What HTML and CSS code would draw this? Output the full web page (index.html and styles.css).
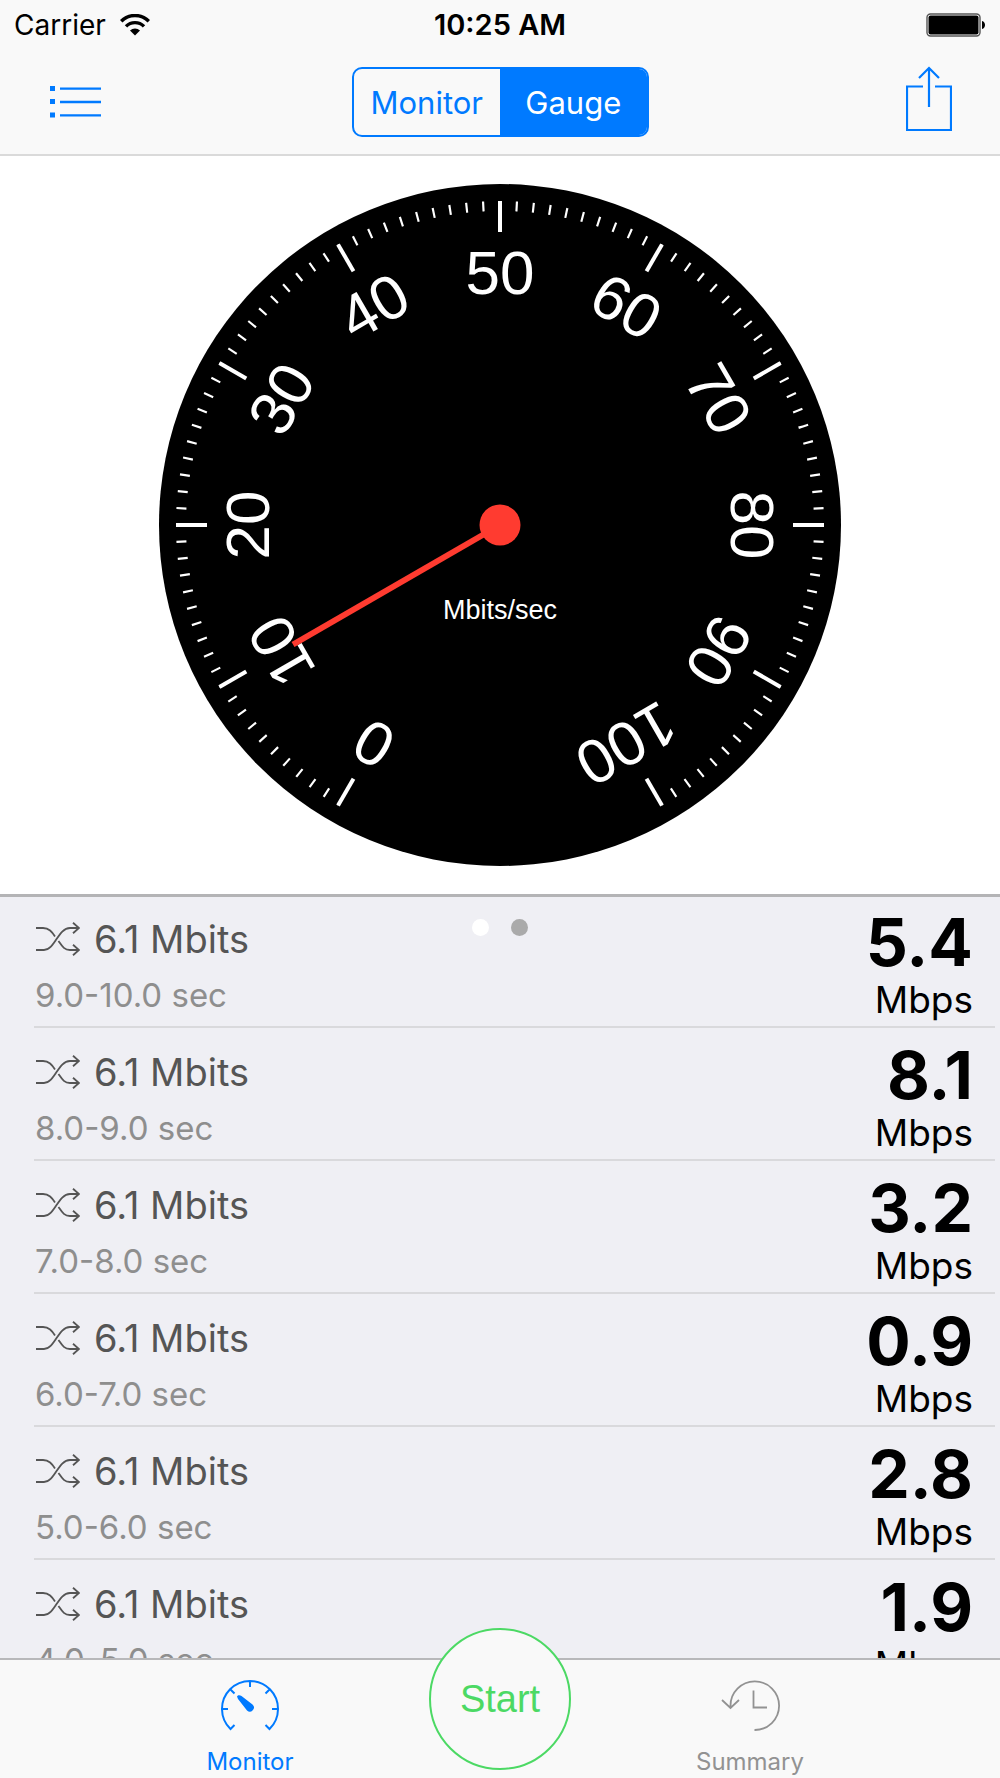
FILE: index.html
```html
<!DOCTYPE html>
<html lang="en">
<head>
<meta charset="utf-8">
<meta name="viewport" content="width=device-width, initial-scale=1">
<title>Bandwidth Gauge</title>
<link rel="stylesheet" href="styles.css">
</head>
<body>
<svg class="sprite" aria-hidden="true">
  <symbol id="shuffle" viewBox="0 0 44 34">
    <path d="M0 6H7C13 6 16 10 19 14.500M22.500 19C26 24 28 28 34 28H43M0 28H8C19 28 22 6 34 6H43M37 .8L43 6L37 11.200M37 22.800L43 28L37 33.200" fill="none" stroke="currentColor" stroke-width="1.800"/>
  </symbol>
</svg>

<header class="header">
  <div class="status">
    <div class="status-left">
      <span>Carrier</span>
      <svg class="wifi" viewBox="0 0 30 22" aria-label="Wi-Fi">
        <g fill="none" stroke="#000" stroke-width="3.400">
          <path d="M1.200 7.200A19.500 19.500 0 0 1 28.800 7.200"/>
          <path d="M6 12.400A12.600 12.600 0 0 1 24 12.400"/>
        </g>
        <path d="M15 21.500L10 16.500A7.200 7.200 0 0 1 20 16.500Z"/>
      </svg>
    </div>
    <time class="clock">10:25 AM</time>
    <svg class="battery" viewBox="0 0 60 24" aria-label="Battery full">
      <rect x="1" y="1" width="53" height="22" rx="3.500" fill="#fff" stroke="#555" stroke-width="1.400"/>
      <rect x="2.500" y="2.500" width="50" height="19" rx="2"/>
      <path d="M56 8C60 9 60 15 56 16Z"/>
    </svg>
  </div>
  <nav class="navbar">
    <button class="icon-button" type="button" aria-label="List">
      <svg class="list-icon" viewBox="0 0 52 32">
        <path d="M0 0H5V5H0ZM0 13H5V18H0ZM0 26.500H5V31.500H0ZM10 1.400H51V3.800H10ZM10 14.800H51V17.200H10ZM10 28.200H51V30.600H10Z" fill="currentColor"/>
      </svg>
    </button>
    <div class="segmented">
      <button class="segment" type="button">Monitor</button>
      <button class="segment selected" type="button">Gauge</button>
    </div>
    <button class="icon-button share" type="button" aria-label="Share">
      <svg class="share-icon" viewBox="0 0 46 66">
        <path d="M17 20.500H1V64H45V20.500H29M23 41V2M13 12L23 2L33 12" fill="none" stroke="currentColor" stroke-width="2.200"/>
      </svg>
    </button>
  </nav>
</header>

<main class="main">
  <section class="gauge-panel">
    <svg class="gauge" viewBox="-341 -341 682 682" role="img" aria-label="10 Mbits/sec">
      <circle r="341"/>
      <path class="minor" d="M-159.500 276.260A319 319 0 1 1 159.500 276.260" pathLength="100"/>
      <g class="major">
        <g transform="rotate(-150)"><path d="M0-324V-293"/><text y="-231">0</text></g>
        <g transform="rotate(-120)"><path d="M0-324V-293"/><text y="-231">10</text></g>
        <g transform="rotate(-90)"><path d="M0-324V-293"/><text y="-231">20</text></g>
        <g transform="rotate(-60)"><path d="M0-324V-293"/><text y="-231">30</text></g>
        <g transform="rotate(-30)"><path d="M0-324V-293"/><text y="-231">40</text></g>
        <g><path d="M0-324V-293"/><text y="-231">50</text></g>
        <g transform="rotate(30)"><path d="M0-324V-293"/><text y="-231">60</text></g>
        <g transform="rotate(60)"><path d="M0-324V-293"/><text y="-231">70</text></g>
        <g transform="rotate(90)"><path d="M0-324V-293"/><text y="-231">80</text></g>
        <g transform="rotate(120)"><path d="M0-324V-293"/><text y="-231">90</text></g>
        <g transform="rotate(150)"><path d="M0-324V-293"/><text y="-231">100</text></g>
      </g>
      <text class="unit-label" y="94">Mbits/sec</text>
      <path class="needle" d="M0 0V-239" transform="rotate(-120)"/>
      <circle class="hub" r="20.500"/>
    </svg>
  </section>

  <section class="results">
    <div class="pager"><span class="dot current"></span><span class="dot"></span></div>
    <ul class="rows">
      <li class="row">
        <div class="info"><div class="amount"><svg class="shuffle"><use href="#shuffle"/></svg>6.1 Mbits</div><div class="interval">9.0-10.0 sec</div></div>
        <div class="rate"><strong class="value">5.4</strong><span class="unit">Mbps</span></div>
      </li>
      <li class="row">
        <div class="info"><div class="amount"><svg class="shuffle"><use href="#shuffle"/></svg>6.1 Mbits</div><div class="interval">8.0-9.0 sec</div></div>
        <div class="rate"><strong class="value">8.1</strong><span class="unit">Mbps</span></div>
      </li>
      <li class="row">
        <div class="info"><div class="amount"><svg class="shuffle"><use href="#shuffle"/></svg>6.1 Mbits</div><div class="interval">7.0-8.0 sec</div></div>
        <div class="rate"><strong class="value">3.2</strong><span class="unit">Mbps</span></div>
      </li>
      <li class="row">
        <div class="info"><div class="amount"><svg class="shuffle"><use href="#shuffle"/></svg>6.1 Mbits</div><div class="interval">6.0-7.0 sec</div></div>
        <div class="rate"><strong class="value">0.9</strong><span class="unit">Mbps</span></div>
      </li>
      <li class="row">
        <div class="info"><div class="amount"><svg class="shuffle"><use href="#shuffle"/></svg>6.1 Mbits</div><div class="interval">5.0-6.0 sec</div></div>
        <div class="rate"><strong class="value">2.8</strong><span class="unit">Mbps</span></div>
      </li>
      <li class="row">
        <div class="info"><div class="amount"><svg class="shuffle"><use href="#shuffle"/></svg>6.1 Mbits</div><div class="interval">4.0-5.0 sec</div></div>
        <div class="rate"><strong class="value">1.9</strong><span class="unit">Mbps</span></div>
      </li>
    </ul>
  </section>
</main>

<footer class="tabbar">
  <a class="tab active" href="#monitor">
    <svg class="tab-icon" viewBox="0 0 60 54">
      <g fill="none" stroke="currentColor" stroke-width="2">
        <path d="M14.500 46L10.500 50A28 28 0 1 1 49.500 50L45.500 46M2 30H8M58 30H52M30 2V8M10.200 10.200L14.500 14.500M49.800 10.200L45.500 14.500"/>
      </g>
      <path d="M17 17.500C18 15.500 20 16 21.500 17L32.500 25.500A4 4 0 0 1 27 31.500L18 20Z" fill="currentColor"/>
    </svg>
    <span>Monitor</span>
  </a>
  <button class="start" type="button">Start</button>
  <a class="tab" href="#summary">
    <svg class="tab-icon" viewBox="0 0 60 54">
      <path d="M10.500 29V27A24.300 24.300 0 1 1 34.500 51M2 21L10.500 29L19 21M33.500 11.500V28.500H47" fill="none" stroke="currentColor" stroke-width="1.800"/>
    </svg>
    <span>Summary</span>
  </a>
</footer>
</body>
</html>
```
FILE: styles.css
```css
* {
  box-sizing: border-box;
}

body {
  margin: 0;
  height: 100vh;
  display: flex;
  flex-direction: column;
  background: #fff;
  color: #000;
  font-family: Inter, "Liberation Sans", sans-serif;
}

button {
  margin: 0;
  padding: 0;
  border: 0;
  background: none;
  color: inherit;
  font: inherit;
}

svg {
  display: block;
}

.sprite {
  display: none;
}

/* Status and navigation */
.header {
  flex: none;
  background: #f9f9f9;
  border-bottom: 2px solid #dadada;
}

.status {
  display: grid;
  grid-template-columns: 1fr auto 1fr;
  align-items: center;
  height: 50px;
  padding: 0 14px;
  font-size: 28px;
  line-height: 34px;
}

.status-left {
  display: flex;
  align-items: center;
  gap: 14px;
}

.wifi {
  width: 30px;
  height: 22px;
}

.clock {
  font-size: 29px;
  font-weight: 600;
}

.battery {
  width: 60px;
  height: 24px;
  justify-self: end;
}

.navbar {
  display: grid;
  grid-template-columns: 1fr auto 1fr;
  align-items: center;
  height: 104px;
  padding: 0 48px;
  color: #007aff;
}

.icon-button {
  justify-self: start;
  padding-left: 2px;
}

.share {
  justify-self: end;
  padding: 0 0 6px;
}

.list-icon {
  width: 52px;
  height: 32px;
}

.share-icon {
  width: 46px;
  height: 66px;
}

.segmented {
  display: grid;
  grid-template-columns: 1fr 1fr;
  width: 297px;
  height: 70px;
  border: 2px solid #007aff;
  border-radius: 10px;
  overflow: hidden;
  font-size: 31px;
}

.segment.selected {
  background: #007aff;
  color: #fff;
}

/* Gauge */
.main {
  flex: 1;
  min-height: 0;
  display: flex;
  flex-direction: column;
}

.gauge-panel {
  flex: none;
  display: flex;
  justify-content: center;
  padding: 28px 20px;
}

.gauge {
  width: 100%;
  max-width: 682px;
  font-family: "Liberation Sans", Arial, sans-serif;
}

.gauge text {
  fill: #fff;
  text-anchor: middle;
  font-size: 62px;
}

.gauge .unit-label {
  font-size: 27px;
}

.minor {
  fill: none;
  stroke: #fff;
  stroke-width: 10;
  stroke-dasharray: 0.13 0.87;
  stroke-dashoffset: 0.065;
}

.major path {
  stroke: #fff;
  stroke-width: 4;
}

.needle {
  stroke: #ff3b30;
  stroke-width: 6;
}

.hub {
  fill: #ff3b30;
}

/* Interval results */
.results {
  position: relative;
  flex: 1;
  min-height: 0;
  overflow: hidden;
  padding-top: 1px;
  background: #efeff4;
  box-shadow: inset 0 3px 0 #b4b4b6;
}

.pager {
  position: absolute;
  top: 25px;
  left: 0;
  right: 0;
  display: flex;
  justify-content: center;
  gap: 22px;
}

.dot {
  width: 17px;
  height: 17px;
  border-radius: 50%;
  background: #aaa;
}

.dot.current {
  background: #fff;
}

.rows {
  margin: 0;
  padding: 0 5px 0 34px;
  list-style: none;
}

.row {
  display: flex;
  justify-content: space-between;
  height: 133px;
  padding: 16px 22px 0 1px;
  border-bottom: 2px solid #d9d9dc;
}

.amount {
  display: flex;
  align-items: center;
  gap: 14px;
  height: 56px;
  padding-left: 1px;
  color: #555;
  font-size: 38px;
}

.shuffle {
  width: 44px;
  height: 34px;
}

.interval {
  color: #8e8e8e;
  font-size: 33px;
  line-height: 56px;
}

.rate {
  display: flex;
  flex-direction: column;
  align-items: flex-end;
}

.value {
  font-size: 66px;
  font-weight: 700;
  line-height: 62px;
}

.unit {
  font-size: 37px;
  line-height: 54px;
}

/* Tab bar */
.tabbar {
  position: relative;
  flex: none;
  display: grid;
  grid-template-columns: 1fr 1fr 1fr;
  justify-items: center;
  align-items: start;
  height: 120px;
  padding: 0 12.5%;
  background: #f9f9f9;
  border-top: 2px solid #b8b8ba;
}

.tab {
  display: flex;
  flex-direction: column;
  align-items: center;
  gap: 13px;
  padding-top: 19px;
  color: #929292;
  font-size: 24px;
  line-height: 32px;
  text-decoration: none;
}

.tab.active {
  color: #007aff;
}

.tab-icon {
  width: 60px;
  height: 54px;
}

.start {
  width: 142px;
  height: 142px;
  margin-top: -32px;
  border: 2px solid #4cd964;
  border-radius: 50%;
  background: #f9f9f9;
  color: #4cd964;
  font-family: "Liberation Sans", Arial, sans-serif;
  font-size: 38px;
}
```
